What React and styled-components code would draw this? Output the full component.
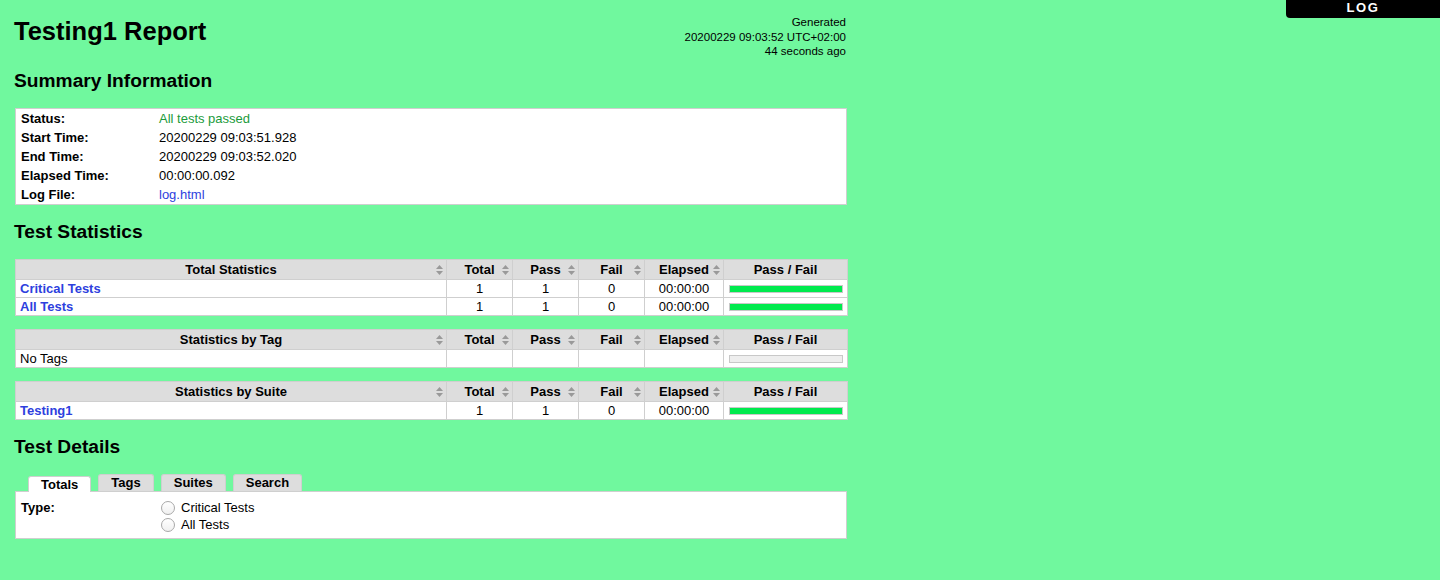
import React from "react";
import styled, { createGlobalStyle } from "styled-components";

const GlobalStyle = createGlobalStyle`
  html, body {
    margin: 0;
    padding: 0;
  }
  body {
    background: #70f89e;
    color: #000;
    font-family: "Liberation Sans", Arial, Helvetica, sans-serif;
    font-size: 13px;
  }
`;

const Page = styled.div`
  width: 832px;
  padding-left: 15px;
`;

const Header = styled.div`
  display: flex;
  justify-content: space-between;
  align-items: flex-start;
  height: 54px;
  padding-top: 14px;
  box-sizing: border-box;
`;

const Title = styled.h1`
  margin: 2px 0 0 -1px;
  font-size: 25.5px;
  line-height: 30px;
  font-weight: bold;
`;

const Generated = styled.div`
  margin: 1px 1px 0 0;
  text-align: right;
  font-size: 11.5px;
  line-height: 14.5px;
  white-space: nowrap;
`;

const LogLink = styled.a`
  position: fixed;
  top: 0;
  right: 0;
  width: 154px;
  height: 18px;
  box-sizing: border-box;
  background: #000;
  color: #fff;
  font-weight: bold;
  font-size: 13px;
  line-height: 15px;
  letter-spacing: 0.12em;
  text-align: center;
  text-decoration: none;
  border-bottom-left-radius: 4px;
`;

const SectionTitle = styled.h2`
  margin: 15px 0 15px -1px;
  font-size: 19.2px;
  line-height: 24px;
  font-weight: bold;
`;

const SummaryBox = styled.div`
  display: grid;
  grid-template-columns: 138px 1fr;
  padding: 0 5px;
  border: 1px solid #cfcfcf;
  background: #fff;
  line-height: 19px;
`;

const SummaryLabel = styled.div`
  font-weight: bold;
`;

const SummaryValue = styled.div`
  color: ${(p) => (p.$tone === "pass" ? "#1b9b3b" : "#000")};
`;

const Link = styled.a`
  color: #2e3fde;
  text-decoration: none;
  font-weight: ${(p) => (p.$bold ? "bold" : "normal")};
`;

const StatTable = styled.table`
  width: 833px;
  margin-bottom: 13px;
  border-collapse: collapse;
  table-layout: fixed;
  background: #fff;
  border: 1px solid #cfcfcf;
`;

const HeadCell = styled.th`
  position: relative;
  width: ${(p) => (p.$w ? `${p.$w}px` : "auto")};
  padding: 0;
  background: #ddd;
  border: 1px solid #cfcfcf;
  font-weight: bold;
  line-height: 19px;
  text-align: center;
`;

const Cell = styled.td`
  padding: 0 ${(p) => (p.$name ? "4px" : "0")};
  border: 1px solid #cfcfcf;
  line-height: 17px;
  text-align: ${(p) => (p.$name ? "left" : "center")};
`;

const BarCell = styled.td`
  padding: 0 4px 0 5px;
  border: 1px solid #cfcfcf;
  height: 17px;
`;

const Bar = styled.div`
  height: 8px;
  box-sizing: border-box;
  border: 1px solid #c8c8c8;
  background: #eee;
  display: flex;
`;

const PassPart = styled.div`
  background: #00ea4e;
  height: 100%;
`;

const SortMark = styled.svg`
  position: absolute;
  right: 3px;
  top: 50%;
  transform: translateY(-50%);
`;

const TabBar = styled.div`
  display: flex;
  align-items: flex-end;
  gap: 7px;
  height: 17px;
  margin-left: 13px;
`;

const Tab = styled.div`
  position: relative;
  z-index: ${(p) => (p.$active ? 1 : 0)};
  padding: 0 12px ${(p) => (p.$active ? "0" : "1px")};
  margin-bottom: ${(p) => (p.$active ? "-1px" : "0")};
  border: 1px solid #cfcfcf;
  border-bottom: none;
  border-radius: 3px 3px 0 0;
  background: ${(p) => (p.$active ? "#fff" : "#ddd")};
  font-weight: bold;
  line-height: 15px;
`;

const DetailsBox = styled.div`
  display: grid;
  grid-template-columns: 140px 1fr;
  align-items: start;
  height: 48px;
  box-sizing: border-box;
  padding: 7px 5px 0;
  border: 1px solid #cfcfcf;
  background: #fff;
  line-height: 17px;
`;

const TypeLabel = styled.div`
  font-weight: bold;
`;

const RadioList = styled.div`
  display: flex;
  flex-direction: column;
`;

const RadioRow = styled.label`
  display: flex;
  align-items: center;
  gap: 6px;
  height: 17px;
`;

const Radio = styled.input`
  appearance: none;
  margin: 0;
  width: 14px;
  height: 14px;
  box-sizing: border-box;
  border: 1px solid #a8a8a8;
  border-radius: 50%;
  background: linear-gradient(#ffffff, #f0f0f0);
`;

function SortIcon() {
  return (
    <SortMark width="7" height="11" viewBox="0 0 7 11">
      <path d="M0 4.5 L3.5 0.5 L7 4.5 Z" fill="#999" />
      <path d="M0 6.5 L3.5 10.5 L7 6.5 Z" fill="#999" />
    </SortMark>
  );
}

const columns = [
  { key: "total", label: "Total", w: 65 },
  { key: "pass", label: "Pass", w: 65 },
  { key: "fail", label: "Fail", w: 65 },
  { key: "elapsed", label: "Elapsed", w: 78 },
];

const statGroups = [
  {
    title: "Total Statistics",
    rows: [
      { name: "Critical Tests", link: true, total: 1, pass: 1, fail: 0, elapsed: "00:00:00" },
      { name: "All Tests", link: true, total: 1, pass: 1, fail: 0, elapsed: "00:00:00" },
    ],
  },
  {
    title: "Statistics by Tag",
    rows: [{ name: "No Tags", empty: true }],
  },
  {
    title: "Statistics by Suite",
    rows: [
      { name: "Testing1", link: true, total: 1, pass: 1, fail: 0, elapsed: "00:00:00" },
    ],
  },
];

function StatsTable({ title, rows }) {
  return (
    <StatTable>
      <thead>
        <tr>
          <HeadCell>
            {title}
            <SortIcon />
          </HeadCell>
          {columns.map((c) => (
            <HeadCell key={c.key} $w={c.w}>
              {c.label}
              <SortIcon />
            </HeadCell>
          ))}
          <HeadCell $w={123}>Pass / Fail</HeadCell>
        </tr>
      </thead>
      <tbody>
        {rows.map((r) => (
          <tr key={r.name}>
            <Cell $name>
              {r.link ? (
                <Link href="#" $bold>
                  {r.name}
                </Link>
              ) : (
                r.name
              )}
            </Cell>
            {columns.map((c) => (
              <Cell key={c.key}>{r.empty ? "" : r[c.key]}</Cell>
            ))}
            <BarCell>
              <Bar>
                {!r.empty && (
                  <PassPart style={{ width: `${(r.pass / r.total) * 100}%` }} />
                )}
              </Bar>
            </BarCell>
          </tr>
        ))}
      </tbody>
    </StatTable>
  );
}

export default function App() {
  return (
    <>
      <GlobalStyle />
      <LogLink href="#">LOG</LogLink>
      <Page>
        <Header>
          <Title>Testing1 Report</Title>
          <Generated>
            Generated
            <br />
            20200229 09:03:52 UTC+02:00
            <br />
            44 seconds ago
          </Generated>
        </Header>

        <SectionTitle>Summary Information</SectionTitle>
        <SummaryBox>
          <SummaryLabel>Status:</SummaryLabel>
          <SummaryValue $tone="pass">All tests passed</SummaryValue>
          <SummaryLabel>Start Time:</SummaryLabel>
          <SummaryValue>20200229 09:03:51.928</SummaryValue>
          <SummaryLabel>End Time:</SummaryLabel>
          <SummaryValue>20200229 09:03:52.020</SummaryValue>
          <SummaryLabel>Elapsed Time:</SummaryLabel>
          <SummaryValue>00:00:00.092</SummaryValue>
          <SummaryLabel>Log File:</SummaryLabel>
          <SummaryValue>
            <Link href="#">log.html</Link>
          </SummaryValue>
        </SummaryBox>

        <SectionTitle>Test Statistics</SectionTitle>
        {statGroups.map((g) => (
          <StatsTable key={g.title} title={g.title} rows={g.rows} />
        ))}

        <SectionTitle>Test Details</SectionTitle>
        <TabBar>
          <Tab $active>Totals</Tab>
          <Tab>Tags</Tab>
          <Tab>Suites</Tab>
          <Tab>Search</Tab>
        </TabBar>
        <DetailsBox>
          <TypeLabel>Type:</TypeLabel>
          <RadioList>
            <RadioRow>
              <Radio type="radio" name="type" />
              Critical Tests
            </RadioRow>
            <RadioRow>
              <Radio type="radio" name="type" />
              All Tests
            </RadioRow>
          </RadioList>
        </DetailsBox>
      </Page>
    </>
  );
}
